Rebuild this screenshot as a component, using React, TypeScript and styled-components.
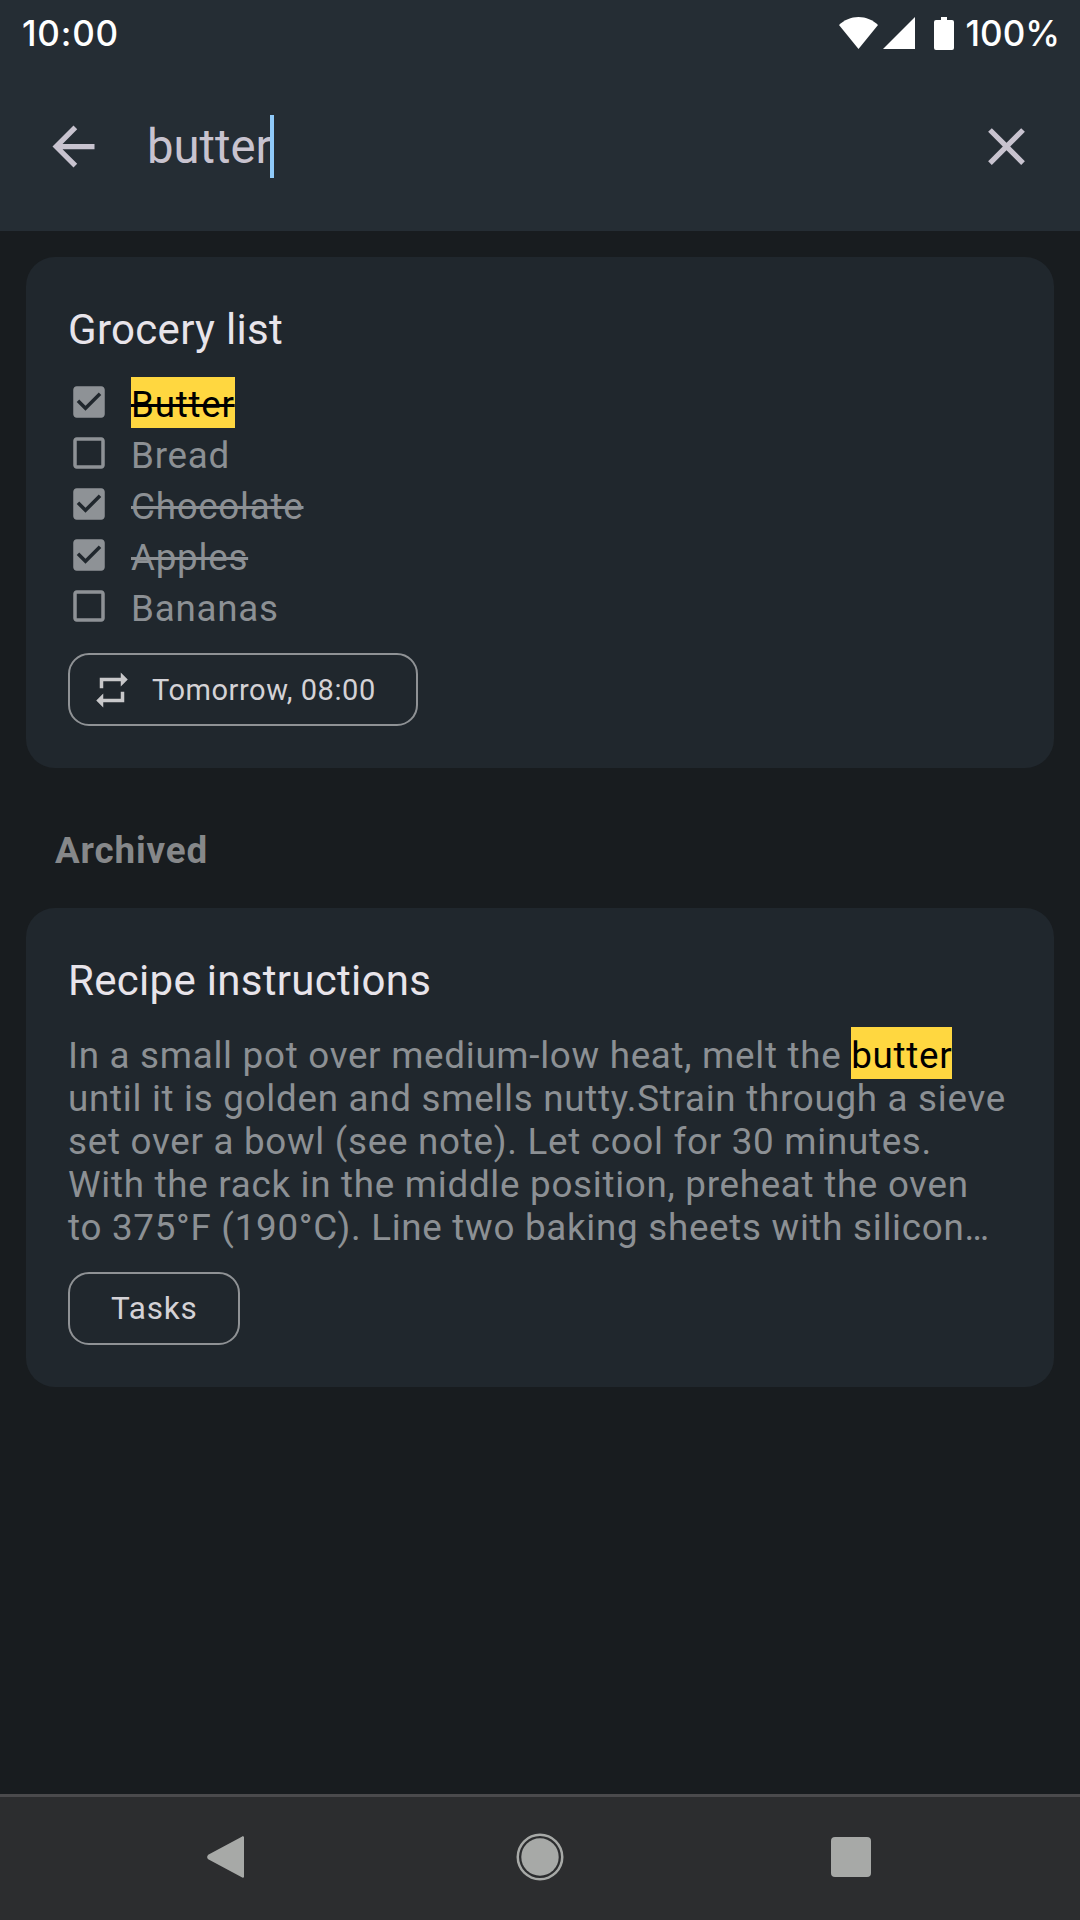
import React from "react";
import styled, { createGlobalStyle } from "styled-components";

const Global = createGlobalStyle`
  html, body { margin: 0; padding: 0; background: #181c1f; }
  * { box-sizing: border-box; }
`;

const Page = styled.div`
  width: 1080px;
  height: 1920px;
  display: flex;
  flex-direction: column;
  background: #181c1f;
  font-family: Roboto, "Liberation Sans", sans-serif;
  overflow: hidden;
`;

const TopBar = styled.header`
  background: #252d34;
  height: 231px;
  display: flex;
  flex-direction: column;
`;

const StatusBar = styled.div`
  height: 66px;
  padding: 0 20px 0 22px;
  display: flex;
  align-items: center;
  justify-content: space-between;
  color: #fff;
  font-family: Inter, sans-serif;
  font-size: 35px;
  font-weight: 500;
`;

const Clock = styled.span`
  letter-spacing: 0.8px;
`;

const StatusRight = styled.div`
  display: flex;
  align-items: center;
`;

const StatusIcon = styled.svg<{ $gap: number }>`
  display: block;
  margin-left: ${(p) => p.$gap}px;
  fill: #fff;
`;

const StatusText = styled.span`
  margin-left: 12px;
`;

const SearchRow = styled.div`
  flex: 1;
  display: flex;
  align-items: center;
  padding: 0 42px 4px;
`;

const HeaderIcon = styled.svg`
  width: 63px;
  height: 63px;
  fill: #c8c3cf;
  flex: none;
`;

const SearchField = styled.div`
  flex: 1;
  display: flex;
  align-items: center;
  margin-left: 42px;
  font-size: 47.25px;
  color: #c8c3cf;
`;

const Caret = styled.span`
  width: 4px;
  height: 63px;
  background: #90caf9;
  margin-left: -2px;
`;

const Main = styled.main`
  flex: 1;
  padding: 26px 26px 0;
`;

const Card = styled.section`
  background: #20272d;
  border-radius: 29px;
  padding: 50px 42px 42px;
`;

const CardTitle = styled.h2`
  margin: 0;
  font-size: 42px;
  font-weight: 400;
  line-height: 46px;
  letter-spacing: 0.3px;
  color: #e8e4ea;
`;

const List = styled.ul`
  list-style: none;
  margin: 25px 0 20px;
  padding: 0;
`;

const Row = styled.li`
  height: 51px;
  display: flex;
  align-items: center;
  gap: 21px;
`;

const CheckIcon = styled.svg`
  width: 42px;
  height: 42px;
  fill: #8e9296;
  flex: none;
  margin-top: -4px;
`;

const ItemText = styled.span<{ $done?: boolean }>`
  padding-top: 2px;
  font-size: 36.75px;
  letter-spacing: 0.75px;
  color: #8c9094;
  text-decoration: ${(p) => (p.$done ? "line-through" : "none")};
`;

const Highlight = styled.mark<{ $pad: string; $strike?: boolean }>`
  background: #ffd740;
  color: #000;
  padding: ${(p) => p.$pad};
  text-decoration: ${(p) => (p.$strike ? "line-through" : "none")};
`;

const Chip = styled.div`
  display: inline-flex;
  align-items: center;
  height: 73px;
  border: 2px solid #8f9295;
  border-radius: 21px;
  color: #d4d2d6;
`;

const ReminderChip = styled(Chip)`
  padding: 0 40px 0 21px;
  font-size: 29px;
  letter-spacing: 0.55px;
`;

const LabelChip = styled(Chip)`
  padding: 0 41px;
  font-size: 31.5px;
  letter-spacing: 0.75px;
`;

const ChipIcon = styled.svg`
  width: 42px;
  height: 42px;
  fill: #c8c8ca;
  margin-right: 19px;
`;

const SectionLabel = styled.h3`
  margin: 61px 0 36px 29px;
  font-size: 36.75px;
  font-weight: 700;
  line-height: 43px;
  letter-spacing: 0.85px;
  color: #86888a;
`;

const Body = styled.p`
  margin: 30px 0 23px;
  padding-right: 5px;
  font-size: 36.75px;
  line-height: 43px;
  letter-spacing: 0.72px;
  color: #8c9094;
`;

const NavBar = styled.nav`
  height: 126px;
  background: #2c2d2f;
  border-top: 3px solid #4a4a4c;
  display: flex;
  align-items: center;
  justify-content: center;
  gap: 247px;
  padding-bottom: 3px;
`;

const NavIcon = styled.svg`
  width: 64px;
  height: 64px;
  fill: #a7a9a7;
`;

export default function App() {
  const items = [
    { t: "Butter", done: true, hi: true },
    { t: "Bread" },
    { t: "Chocolate", done: true },
    { t: "Apples", done: true },
    { t: "Bananas" },
  ];
  return (
    <Page>
      <Global />
      <TopBar>
        <StatusBar>
          <Clock>10:00</Clock>
          <StatusRight>
            <StatusIcon $gap={0} width="39" height="32" viewBox="0 0 39 32">
              <path d="M19.5 32 0 8C5 3 12 0 19.5 0S34 3 39 8z" />
            </StatusIcon>
            <StatusIcon $gap={5} width="32" height="32" viewBox="0 0 32 32">
              <path d="M32 0v32H0z" />
            </StatusIcon>
            <StatusIcon $gap={19} width="20" height="33" viewBox="0 0 20 33">
              <path d="M7 0h6v3h5a2 2 0 0 1 2 2v26a2 2 0 0 1-2 2H2a2 2 0 0 1-2-2V5a2 2 0 0 1 2-2h5z" />
            </StatusIcon>
            <StatusText>100%</StatusText>
          </StatusRight>
        </StatusBar>
        <SearchRow>
          <HeaderIcon viewBox="0 0 24 24">
            <path d="M20 11H7.83l5.59-5.59L12 4l-8 8 8 8 1.41-1.41L7.83 13H20v-2z" />
          </HeaderIcon>
          <SearchField>
            butter
            <Caret />
          </SearchField>
          <HeaderIcon viewBox="0 0 24 24">
            <path d="M19 6.41L17.59 5 12 10.59 6.41 5 5 6.41 10.59 12 5 17.59 6.41 19 12 13.41 17.59 19 19 17.59 13.41 12z" />
          </HeaderIcon>
        </SearchRow>
      </TopBar>
      <Main>
        <Card>
          <CardTitle>Grocery list</CardTitle>
          <List>
            {items.map((it) => (
              <Row key={it.t}>
                <CheckIcon viewBox="0 0 24 24">
                  {it.done ? (
                    <path d="M19 3H5c-1.11 0-2 .9-2 2v14c0 1.1.89 2 2 2h14c1.11 0 2-.9 2-2V5c0-1.1-.89-2-2-2zm-9 14l-5-5 1.41-1.41L10 14.17l7.59-7.59L19 8l-9 9z" />
                  ) : (
                    <path d="M19 5v14H5V5h14m0-2H5c-1.1 0-2 .9-2 2v14c0 1.1.9 2 2 2h14c1.1 0 2-.9 2-2V5c0-1.1-.9-2-2-2z" />
                  )}
                </CheckIcon>
                {it.hi ? (
                  <ItemText>
                    <Highlight $pad="6px 0 2px" $strike>{it.t}</Highlight>
                  </ItemText>
                ) : (
                  <ItemText $done={it.done}>{it.t}</ItemText>
                )}
              </Row>
            ))}
          </List>
          <ReminderChip>
            <ChipIcon viewBox="0 0 24 24">
              <path d="M7 7h10v3l4-4-4-4v3H5v6h2V7zm10 10H7v-3l-4 4 4 4v-3h12v-6h-2v4z" />
            </ChipIcon>
            Tomorrow, 08:00
          </ReminderChip>
        </Card>
        <SectionLabel>Archived</SectionLabel>
        <Card>
          <CardTitle>Recipe instructions</CardTitle>
          <Body>
            In a small pot over medium-low heat, melt the <Highlight $pad="7px 0 2px">butter</Highlight> until it is golden and smells nutty.Strain through a sieve set over a bowl (see note). Let cool for 30 minutes. With the rack in the middle position, preheat the oven to 375°F (190°C). Line two baking sheets with silicon…
          </Body>
          <LabelChip>Tasks</LabelChip>
        </Card>
      </Main>
      <NavBar>
        <NavIcon viewBox="0 0 64 64">
          <path d="M44.8 11.7c.9-.9 2.2-.3 2.2.9v38.8c0 1.2-1.3 1.8-2.2.9L11.2 34.3a3.4 3.4 0 0 1 0-4.6z" />
        </NavIcon>
        <NavIcon viewBox="0 0 64 64">
          <path fillRule="evenodd" d="M32 8.5a23.5 23.5 0 1 1 0 47 23.5 23.5 0 0 1 0-47zm0 2.5a21 21 0 1 0 0 42 21 21 0 0 0 0-42z" />
          <circle cx="32" cy="32" r="18.7" />
        </NavIcon>
        <NavIcon viewBox="0 0 64 64">
          <rect x="12" y="12" width="40" height="40" rx="4" />
        </NavIcon>
      </NavBar>
    </Page>
  );
}
